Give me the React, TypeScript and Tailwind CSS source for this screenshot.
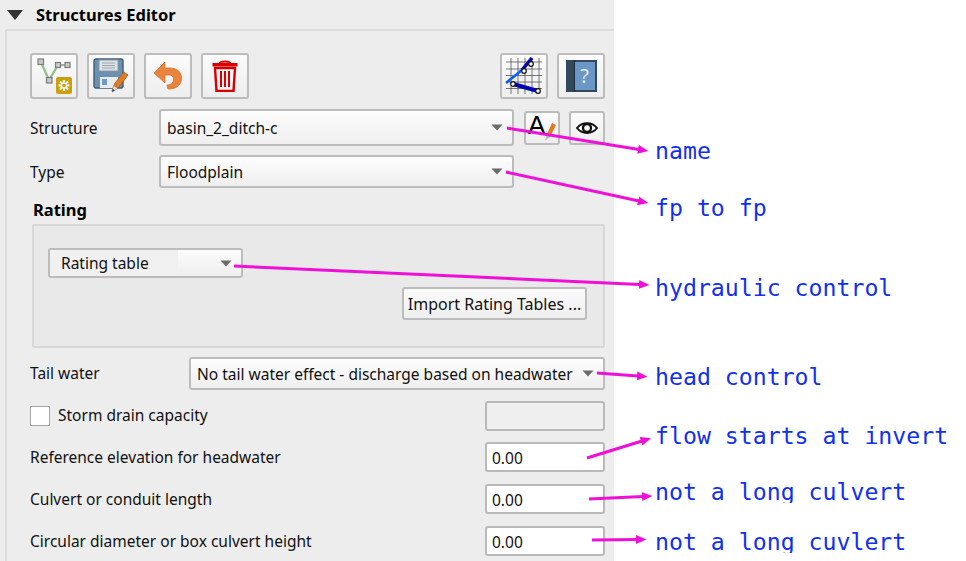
const Caret = () => (
  <svg width="12" height="7" viewBox="0 0 12 7" className="shrink-0">
    <path d="M0.5 0.5H11.5L6 6.5Z" fill="#6b6b6b" />
  </svg>
)

const Combo = ({ text, className }: { text: string; className: string }) => (
  <div className={"flex items-center rounded-[3px] border-2 border-[#bcbcbc] bg-gradient-to-b from-[#fdfdfd] to-[#efefef] pl-[6px] pr-[9px] " + className}>
    <span className="flex-1 overflow-hidden whitespace-nowrap">{text}</span>
    <span className="ml-[9px]"><Caret /></span>
  </div>
)

const ToolButton = ({ children, className }: { children: React.ReactNode; className: string }) => (
  <div className={"flex items-center justify-center rounded-[3px] border-2 border-[#bcbcbc] bg-gradient-to-b from-[#fbfbfb] to-[#eeeeee] " + className}>
    {children}
  </div>
)

const NumberRow = ({ label, value, className }: { label: string; value: string; className: string }) => (
  <div className={"flex items-center justify-between " + className}>
    <span>{label}</span>
    <div className="flex h-[30px] w-[120px] items-center rounded-[3px] border-2 border-[#b9b9b9] bg-white pl-[5px] pt-[2px] text-[15.5px]">{value}</div>
  </div>
)

const NodesIcon = () => (
  <svg width="38" height="38" viewBox="0 0 38 38">
    <path d="M6 5L14 23L23 8H33" fill="none" stroke="#8fc08a" strokeWidth="2.200" />
    <rect x="3" y="2" width="5.500" height="5.500" fill="#c9c9c9" stroke="#7c7c7c" strokeWidth="1.200" />
    <rect x="11.500" y="20.500" width="5.500" height="5.500" fill="#c9c9c9" stroke="#7c7c7c" strokeWidth="1.200" />
    <rect x="20.500" y="5.500" width="5" height="5" fill="#c9c9c9" stroke="#7c7c7c" strokeWidth="1.200" />
    <rect x="30" y="5.500" width="5" height="5" fill="#c9c9c9" stroke="#7c7c7c" strokeWidth="1.200" />
    <rect x="21" y="20" width="16" height="17" rx="2" fill="#c9a10f" />
    <path d="M29 23V34M23.500 28.500H34.500M25 24.500L33 32.500M33 24.500L25 32.500" stroke="#fff" strokeWidth="1.800" />
    <circle cx="29" cy="28.500" r="2.400" fill="#c9a10f" stroke="#fff" />
  </svg>
)

const SaveIcon = () => (
  <svg width="36" height="36" viewBox="0 0 36 36">
    <rect x="1" y="1" width="29" height="29" rx="2" fill="#6b90b0" stroke="#3f5d78" strokeWidth="1.400" />
    <rect x="6" y="2" width="19" height="11" fill="#dfe3e6" stroke="#8a98a4" />
    <path d="M9 5H22M9 7.500H22M9 10H22" stroke="#9aa4ad" />
    <rect x="7" y="19" width="18" height="11" fill="#e8ebee" />
    <rect x="9" y="21" width="5" height="6" fill="#6f9cc4" />
    <path d="M19 33L22 25L31 14L35 17L26 29Z" fill="#e07b26" stroke="#a85414" strokeWidth="0.700" />
    <path d="M19 34L20.500 27.500L25 30.500Z" fill="#e7e2d8" stroke="#777" strokeWidth="0.500" />
    <path d="M19 34L19.800 31L22 32.500Z" fill="#444" />
  </svg>
)

const UndoIcon = () => (
  <svg width="30" height="30" viewBox="0 0 30 30">
    <path d="M1 12L12 1V7H17C24 7 28.500 11 28.500 17C28.500 23 25 28 15 28L14 24C19 24 20.500 21 20.500 18C20.500 15 18.500 14 16 14H12V22Z" fill="#e8843d" stroke="#d9732c" strokeWidth="0.800" strokeLinejoin="round" />
  </svg>
)

const TrashIcon = () => (
  <svg width="26" height="32" viewBox="0 0 26 32">
    <path d="M8 3C8 1 18 1 18 3" fill="none" stroke="#d80000" strokeWidth="2" />
    <rect x="0.500" y="3" width="25" height="3.500" fill="#d80000" />
    <path d="M3 8H23L21.500 31H4.500Z" fill="none" stroke="#d80000" strokeWidth="2.400" />
    <path d="M9 11V27M13 11V27M17 11V27" stroke="#d80000" strokeWidth="2" />
  </svg>
)

const GridIcon = () => (
  <svg width="38" height="38" viewBox="0 0 38 38">
    <path d="M6 1V37M13 1V37M20 1V37M27 1V37M34 1V37M1 5H37M1 12H37M1 18.500H37M1 25H37M1 31.500H37" stroke="#555" strokeWidth="0.800" />
    <path d="M1 26L17 13" stroke="#0a5cff" strokeWidth="2.600" />
    <path d="M17 13L27 1" stroke="#0000b4" strokeWidth="3.500" />
    <path d="M8 27L33 34" stroke="#0000b4" strokeWidth="4" />
    <circle cx="19" cy="14" r="2.300" fill="#fff" stroke="#111" strokeWidth="1.200" />
    <circle cx="26" cy="7" r="2.300" fill="#fff" stroke="#111" strokeWidth="1.200" />
    <circle cx="8" cy="27" r="2.300" fill="#fff" stroke="#111" strokeWidth="1.200" />
    <circle cx="33" cy="34" r="2.300" fill="#fff" stroke="#111" strokeWidth="1.200" />
  </svg>
)

const HelpBookIcon = () => (
  <div className="flex h-[32px] w-[31px]">
    <div className="w-[9px] border-r border-[#1d2c3a] bg-[#33485c]" />
    <div className="flex flex-1 items-center justify-center border-y-2 border-r-2 border-[#33485c] bg-[#6a97c5] text-[20px] leading-none text-[#e8eff7]">?</div>
  </div>
)

const EyeIcon = () => (
  <svg width="22" height="14" viewBox="0 0 22 14">
    <path d="M1 7C6 0.500 16 0.500 21 7C16 13.500 6 13.500 1 7Z" fill="#fff" stroke="#111" strokeWidth="2" />
    <circle cx="11" cy="7" r="4" fill="none" stroke="#111" strokeWidth="2.400" />
  </svg>
)

const LabelIcon = () => (
  <div className="relative h-[30px] w-[30px]">
    <span className="absolute left-[1px] top-[-2px] font-['Liberation_Sans',sans-serif] text-[26px] leading-[28px] text-black">A</span>
    <svg width="14" height="20" viewBox="0 0 14 20" className="absolute right-0 top-[9px]">
      <path d="M3.500 13L9 1L13 3L7 15Z" fill="#e37a22" />
      <path d="M2 19L3.500 13L7 15Z" fill="#bdbdbd" />
    </svg>
  </div>
)

const arrows = [
  [507, 128, 639, 149.500],
  [506, 172, 639, 201],
  [234, 266, 640, 284.500],
  [597, 373, 638, 376],
  [587, 458, 642, 441],
  [589, 499, 643, 496.500],
  [592, 540, 637, 539.500],
]

const Annotation = ({ text, className }: { text: string; className: string }) => (
  <div className={"overflow-hidden whitespace-nowrap font-['DejaVu_Sans_Mono',monospace] text-[23.200px] leading-[28px] text-[#1030f0] " + className}>{text}</div>
)

export default function App() {
  return (
    <div className="relative flex h-[561px] w-[966px] overflow-hidden bg-white font-['Noto_Sans',sans-serif] text-[15.5px] leading-[20px] text-[#111]">
      <div className="h-full w-[614px] shrink-0 bg-[#ededed]">
        <div className="flex h-[29px] items-center pl-[7px]">
          <svg width="16" height="10" viewBox="0 0 16 10"><path d="M0 0H16L8 10Z" fill="#333" /></svg>
          <span className="ml-[13px] text-[16.500px] font-bold text-black">Structures Editor</span>
        </div>
        <div className="ml-[5px] h-[532px] rounded-tl-[3px] border-l-2 border-t-2 border-[#dcdcdc] pl-[23px] pr-[9px] pt-[22px]">
          <div className="flex h-[46px] justify-between">
            <div className="flex gap-[9px]">
              <ToolButton className="h-[46px] w-[48px]"><NodesIcon /></ToolButton>
              <ToolButton className="h-[46px] w-[48px]"><SaveIcon /></ToolButton>
              <ToolButton className="h-[46px] w-[48px]"><UndoIcon /></ToolButton>
              <ToolButton className="h-[46px] w-[48px]"><TrashIcon /></ToolButton>
            </div>
            <div className="flex gap-[9px]">
              <ToolButton className="h-[46px] w-[48px]"><GridIcon /></ToolButton>
              <ToolButton className="h-[46px] w-[48px]"><HelpBookIcon /></ToolButton>
            </div>
          </div>
          <div className="mt-[10px] flex h-[37px] items-center">
            <span className="w-[129px]">Structure</span>
            <Combo text="basin_2_ditch-c" className="h-[37px] w-[355px]" />
            <ToolButton className="ml-[10px] h-[34px] w-[36px]"><LabelIcon /></ToolButton>
            <ToolButton className="ml-[9px] h-[34px] w-[36px]"><EyeIcon /></ToolButton>
          </div>
          <div className="mt-[9px] flex h-[33px] items-center">
            <span className="w-[129px]">Type</span>
            <Combo text="Floodplain" className="h-[33px] w-[355px]" />
          </div>
          <div className="ml-[3px] mt-[12px] h-[24px] text-[16.500px] font-bold leading-[20px] text-black">Rating</div>
          <div className="ml-[2px] h-[124px] rounded-[2px] border-2 border-[#d8d8d8] bg-[#e9e9e9] pl-[14px] pr-[16px] pt-[22px]">
            <div className="relative flex h-[30px] w-[195px] items-center overflow-hidden rounded-[3px] border-2 border-[#bcbcbc] bg-gradient-to-b from-[#fbfbfb] to-[#efefef]">
              <div className="flex h-full w-[128px] items-center bg-[#f0f0f0] pl-[11px]">Rating table</div>
              <div className="flex flex-1 justify-end pr-[9px]"><Caret /></div>
            </div>
            <div className="mt-[9px] flex justify-end">
              <div className="flex h-[33px] w-[185px] items-center justify-center rounded-[3px] border-2 border-[#bcbcbc] bg-gradient-to-b from-[#fbfbfb] to-[#efefef] text-[16px]">Import Rating Tables ...</div>
            </div>
          </div>
          <div className="mt-[9px] flex h-[33px] items-center">
            <span className="w-[159px] pb-[2px]">Tail water</span>
            <Combo text="No tail water effect - discharge based on headwater" className="h-[33px] w-[416px]" />
          </div>
          <div className="mt-[11px] flex h-[30px] items-center justify-between">
            <div className="flex items-center">
              <div className="h-[20px] w-[20px] border border-[#a5a5a5] bg-white" />
              <span className="ml-[8px] pb-[2px]">Storm drain capacity</span>
            </div>
            <div className="h-[30px] w-[120px] rounded-[3px] border-2 border-[#b9b9b9] bg-[#efefef]" />
          </div>
          <NumberRow label="Reference elevation for headwater" value="0.00" className="mt-[11px]" />
          <NumberRow label="Culvert or conduit length" value="0.00" className="mt-[12px]" />
          <NumberRow label="Circular diameter or box culvert height" value="0.00" className="mt-[12px]" />
        </div>
      </div>
      <div className="flex-1 pl-[41px] pt-[137px]">
        <Annotation text="name" className="h-[28px]" />
        <Annotation text="fp to fp" className="mt-[29px] h-[28px]" />
        <Annotation text="hydraulic control" className="mt-[52px] h-[28px]" />
        <Annotation text="head control" className="mt-[61px] h-[28px]" />
        <Annotation text="flow starts at invert" className="mt-[31px] h-[28px]" />
        <Annotation text="not a long culvert" className="mt-[28px] h-[25px]" />
        <Annotation text="not a long cuvlert" className="mt-[25px] h-[25px]" />
      </div>
      <svg width="966" height="561" viewBox="0 0 966 561" className="pointer-events-none absolute left-0 top-0">
        <defs>
          <marker id="head" markerUnits="userSpaceOnUse" markerWidth="11" markerHeight="10" refX="1" refY="5" orient="auto">
            <path d="M0 0.500L10.500 5L0 9.500Z" fill="#ee10d8" />
          </marker>
        </defs>
        {arrows.map(([x1, y1, x2, y2]) => (
          <line key={x1 + "-" + y1} x1={x1} y1={y1} x2={x2} y2={y2} stroke="#ee10d8" strokeWidth="3" markerEnd="url(#head)" />
        ))}
      </svg>
    </div>
  )
}
